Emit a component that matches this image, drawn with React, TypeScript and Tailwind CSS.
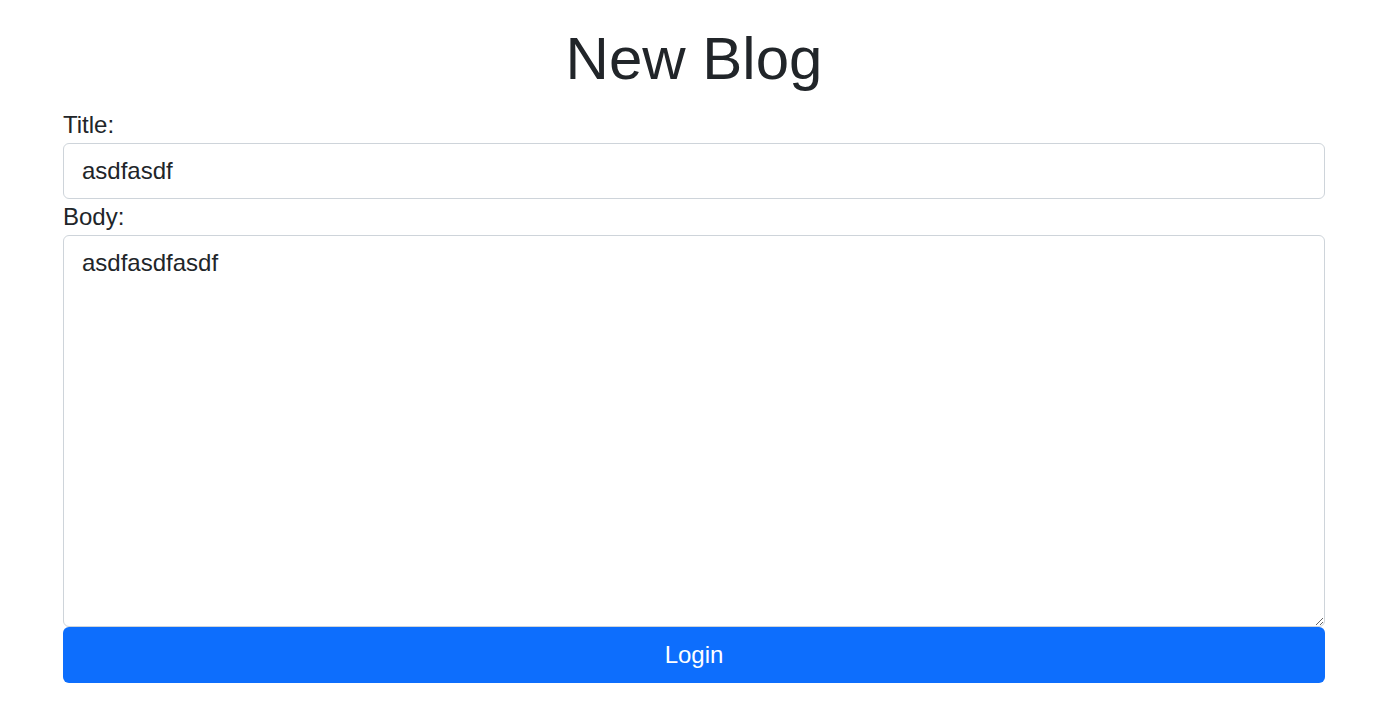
import { useState } from 'react'

const App = () => {
  const [title, setTitle] = useState('asdfasdf')
  const [body, setBody] = useState('asdfasdfasdf')

  return (
    <div className="min-h-screen bg-white text-[#212529] font-['Liberation_Sans',Arial,sans-serif]">
      <div className="w-[1262px] ml-[63px] pt-[23px]">
        <h1 className="text-[60px] leading-[72px] text-center font-normal mb-[12px]">New Blog</h1>
        <form onSubmit={(e) => e.preventDefault()}>
          <label htmlFor="title" className="block text-[24px] leading-[36px]">Title:</label>
          <input
            id="title"
            type="text"
            value={title}
            onChange={(e) => setTitle(e.target.value)}
            className="block w-full h-[56px] px-[18px] py-[9px] text-[24px] leading-[36px] border border-[#ced4da] rounded-[6px] outline-none"
          />
          <label htmlFor="body" className="block text-[24px] leading-[36px]">Body:</label>
          <textarea
            id="body"
            value={body}
            onChange={(e) => setBody(e.target.value)}
            className="block w-full h-[392px] px-[18px] py-[9px] text-[24px] leading-[36px] border border-[#ced4da] rounded-[6px] outline-none"
          />
          <button
            type="submit"
            className="block w-full h-[56px] text-[24px] leading-[36px] text-white bg-[#0d6efd] rounded-[6px]"
          >
            Login
          </button>
        </form>
      </div>
    </div>
  )
}

export default App
